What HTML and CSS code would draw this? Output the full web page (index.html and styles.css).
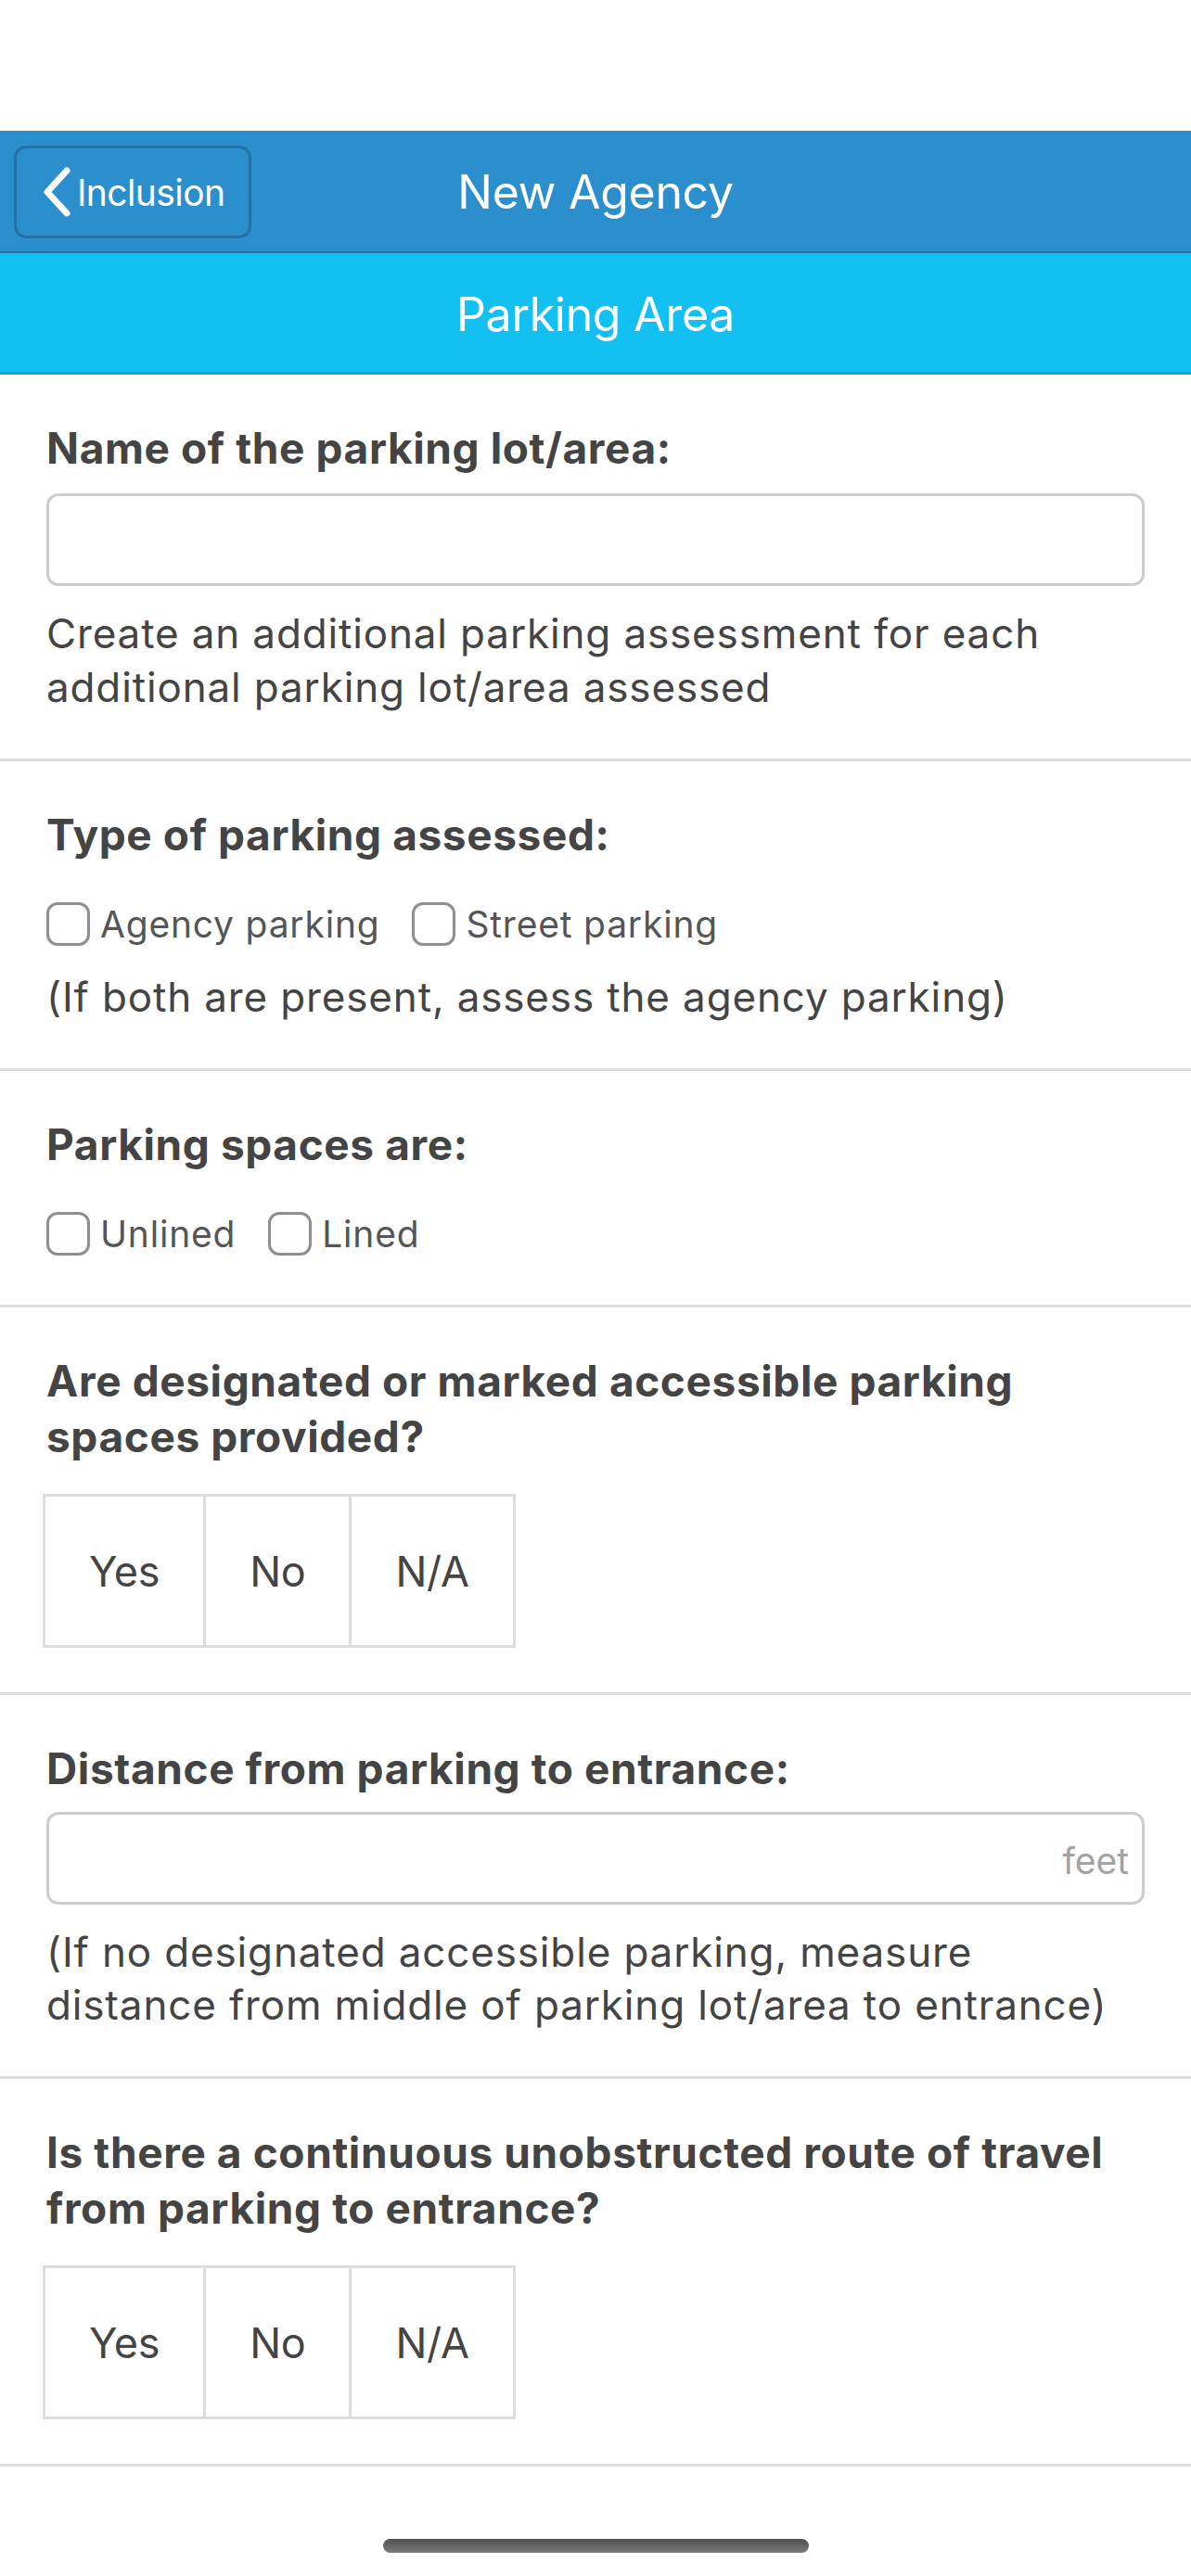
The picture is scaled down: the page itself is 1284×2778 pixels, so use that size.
FILE: index.html
```html
<!DOCTYPE html>
<html lang="en">
<head>
<meta charset="utf-8">
<title>New Agency - Parking Area</title>
<link rel="stylesheet" href="styles.css">
</head>
<body>
<div class="screen">
  <div class="status-bar"></div>
  <header class="navbar">
    <div class="nav-left">
      <button class="back-btn" type="button">
        <svg class="chev" width="34" height="56" viewBox="0 0 34 56" aria-hidden="true">
          <path d="M28 5 L7 28 L28 51" fill="none" stroke="#ffffff" stroke-width="7" stroke-linecap="round" stroke-linejoin="round"/>
        </svg>
        <span>Inclusion</span>
      </button>
    </div>
    <div class="nav-title">New Agency</div>
    <div class="nav-right"></div>
  </header>
  <div class="subheader">Parking Area</div>

  <main class="list">
    <section class="item">
      <div class="label">Name of the parking lot/area:</div>
      <div class="field"></div>
      <div class="help">Create an additional parking assessment for each additional parking lot/area assessed</div>
    </section>

    <section class="item">
      <div class="label">Type of parking assessed:</div>
      <div class="checks">
        <label class="check"><span class="box"></span><span class="check-text">Agency parking</span></label>
        <label class="check"><span class="box"></span><span class="check-text">Street parking</span></label>
      </div>
      <div class="help help-tight">(If both are present, assess the agency parking)</div>
    </section>

    <section class="item">
      <div class="label">Parking spaces are:</div>
      <div class="checks">
        <label class="check"><span class="box"></span><span class="check-text">Unlined</span></label>
        <label class="check"><span class="box"></span><span class="check-text">Lined</span></label>
      </div>
    </section>

    <section class="item">
      <div class="label">Are designated or marked accessible parking spaces provided?</div>
      <div class="segments">
        <div class="seg">Yes</div>
        <div class="seg">No</div>
        <div class="seg">N/A</div>
      </div>
    </section>

    <section class="item">
      <div class="label">Distance from parking to entrance:</div>
      <div class="field field-unit"><span class="unit">feet</span></div>
      <div class="help help-low">(If no designated accessible parking, measure distance from middle of parking lot/area to entrance)</div>
    </section>

    <section class="item">
      <div class="label">Is there a continuous unobstructed route of travel from parking to entrance?</div>
      <div class="segments">
        <div class="seg">Yes</div>
        <div class="seg">No</div>
        <div class="seg">N/A</div>
      </div>
    </section>
  </main>

  <div class="home-area">
    <div class="home-indicator"></div>
  </div>
</div>
</body>
</html>
```

FILE: styles.css
```css
* {
  box-sizing: border-box;
}

html, body {
  margin: 0;
  padding: 0;
  background: #ffffff;
}

body {
  font-family: Inter, "Noto Sans", "DejaVu Sans", sans-serif;
  color: #444444;
}

.screen {
  width: 1284px;
  min-height: 2778px;
  display: flex;
  flex-direction: column;
  background: #ffffff;
}

.status-bar {
  height: 141px;
  background: #ffffff;
}

.navbar {
  height: 132px;
  background: #2b8fcd;
  border-bottom: 2px solid #2471a7;
  display: grid;
  grid-template-columns: 1fr auto 1fr;
  align-items: center;
}

.nav-left {
  display: flex;
  align-items: center;
  padding-left: 15px;
}

.back-btn {
  height: 100px;
  margin-top: 2px;
  display: flex;
  align-items: center;
  gap: 5px;
  padding: 0 26px 0 26px;
  background: transparent;
  border: 3px solid #2471a7;
  border-radius: 13px;
  color: #ffffff;
  font-family: Inter, "Noto Sans", sans-serif;
  font-size: 39px;
  font-weight: 400;
  letter-spacing: -0.6px;
  cursor: pointer;
}

.chev {
  display: block;
  flex: none;
}

.nav-title {
  color: #ffffff;
  font-size: 50px;
  font-weight: 400;
  letter-spacing: -0.3px;
  line-height: 1;
  padding-top: 2px;
}

.subheader {
  height: 131px;
  background: #12c0f2;
  border-bottom: 3px solid #0aa2d4;
  color: #ffffff;
  font-size: 50px;
  font-weight: 400;
  letter-spacing: -0.3px;
  display: flex;
  align-items: center;
  justify-content: center;
  padding-top: 4px;
}

.list {
  display: flex;
  flex-direction: column;
}

.item {
  padding: 49px 50px 48px 50px;
  border-bottom: 3px solid #dddddd;
}

.label {
  font-size: 46px;
  font-weight: 700;
  line-height: 60px;
  color: #444444;
  letter-spacing: 0.6px;
}

.field {
  margin-top: 19px;
  height: 100px;
  border: 3px solid #cccccc;
  border-radius: 13px;
  background: #ffffff;
}

.field-unit {
  margin-top: 17px;
  display: flex;
  align-items: center;
  justify-content: flex-end;
  padding-right: 14px;
  padding-top: 4px;
}

.unit {
  font-size: 39px;
  color: #a3a3a3;
}

.help {
  margin-top: 22px;
  font-size: 44px;
  line-height: 58px;
  color: #444444;
  letter-spacing: 0.85px;
}

.help-tight {
  margin-top: 26px;
}

.help-low {
  margin-top: 23px;
  line-height: 57px;
}

.checks {
  display: flex;
  align-items: center;
  gap: 35px;
  margin: 42px 0 5px 0;
  height: 48px;
}

.check {
  display: flex;
  align-items: center;
  gap: 11px;
}

.box {
  width: 47px;
  height: 47px;
  border: 3px solid #8e8e93;
  border-radius: 12px;
  flex: none;
}

.check-text {
  font-size: 39px;
  color: #555555;
  letter-spacing: 0.8px;
}

.segments {
  margin-top: 32px;
  margin-left: -4px;
  display: flex;
  width: max-content;
  border: 3px solid #dddddd;
  height: 166px;
}

.seg {
  display: flex;
  align-items: center;
  justify-content: center;
  padding: 0 47px;
  font-size: 45px;
  color: #444444;
  letter-spacing: -0.3px;
}

.seg + .seg {
  border-left: 3px solid #dddddd;
}

.home-area {
  flex: 1;
  display: flex;
  align-items: flex-end;
  justify-content: center;
  padding-bottom: 25px;
}

.home-indicator {
  width: 459px;
  height: 15px;
  border-radius: 8px;
  background: linear-gradient(180deg, #4e4e4e 0%, #7c7c7c 100%);
}
```
